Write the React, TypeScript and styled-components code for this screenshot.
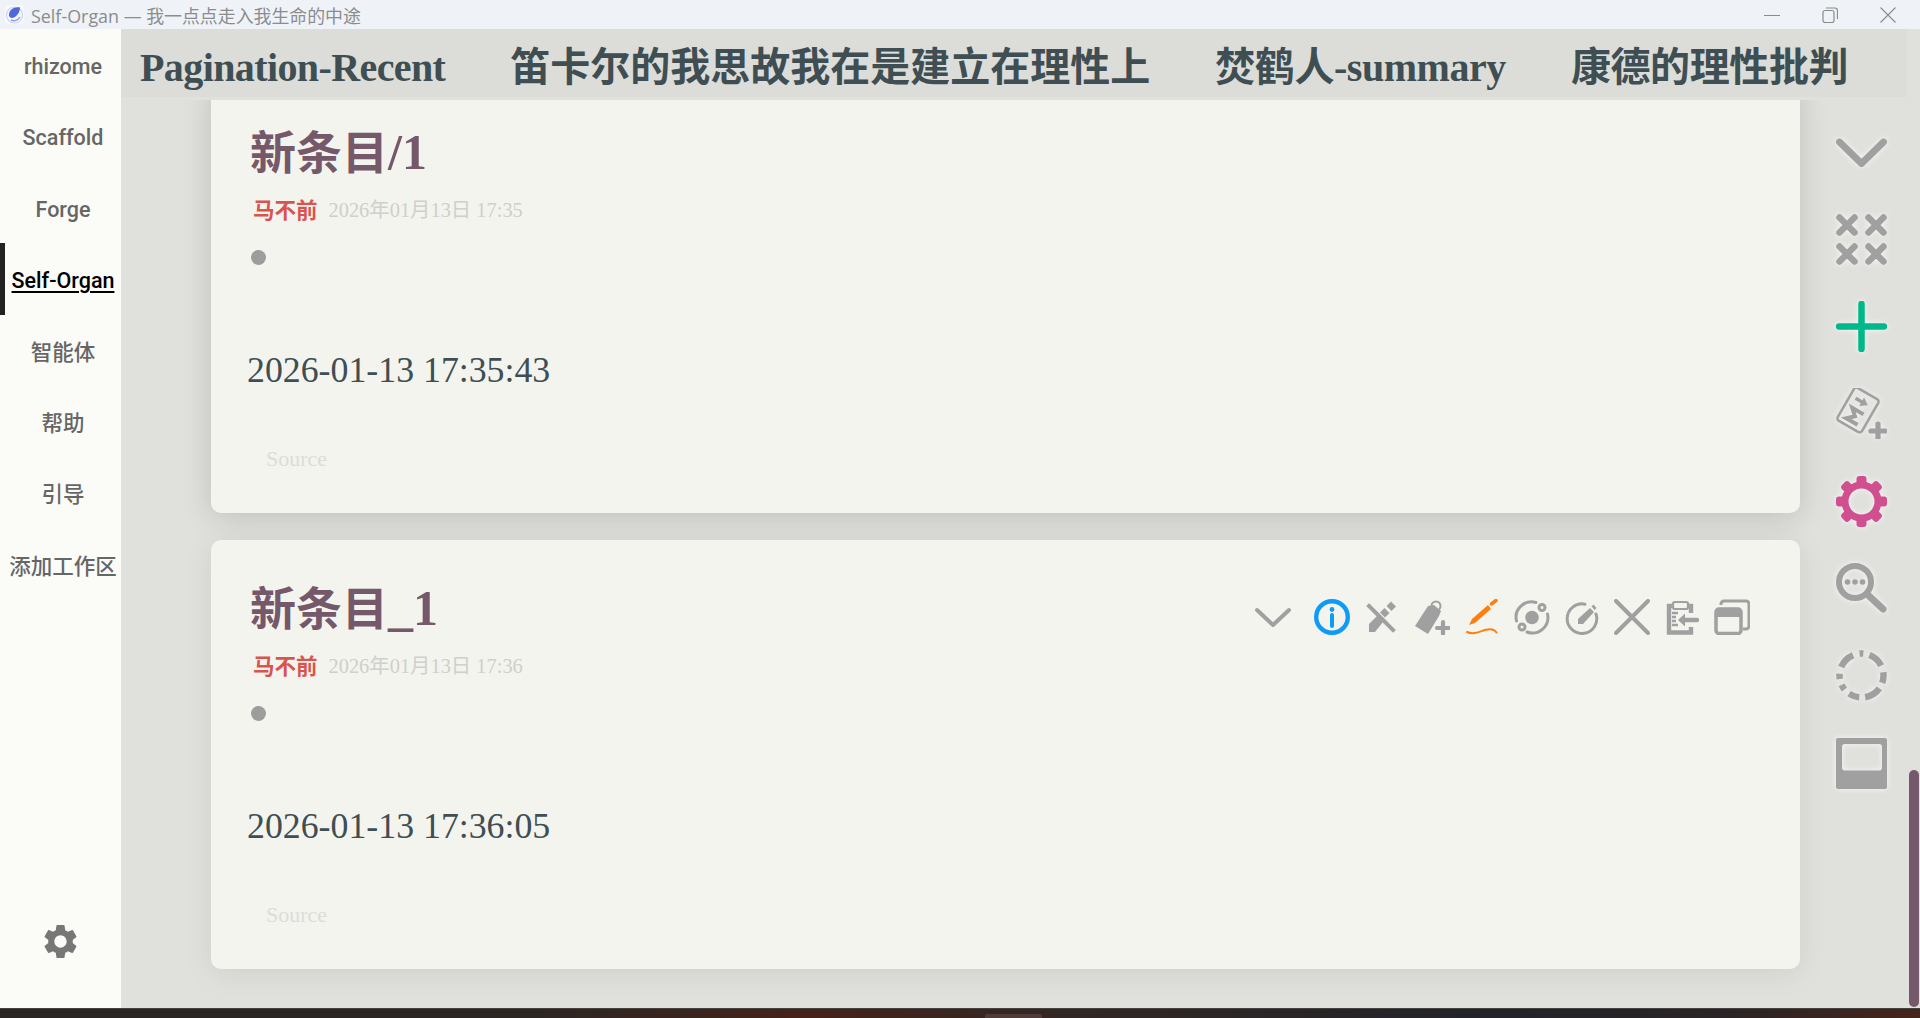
import * as React from 'react';
import styled, { createGlobalStyle } from 'styled-components';
import { MdSettings } from 'react-icons/md';

const GlobalStyle = createGlobalStyle`
    html, body {
        margin: 0;
        height: 100%;
        overflow: hidden;
        background: #e0e1dd;
    }
    * {
        box-sizing: border-box;
    }
`

const serif = `"Liberation Serif", "Noto Sans CJK SC", serif`;
const sans = `Roboto, "Noto Sans CJK SC", sans-serif`;
const iconGrey = '#a0a0a0';

const Shell = styled.div`
    display: flex;
    flex-direction: column;
    width: 1920px;
    height: 1018px;
`

const TitleBar = styled.div`
    display: flex;
    align-items: center;
    height: 29px;
    flex-shrink: 0;
    padding-left: 5px;
    background: #eff3f7;
`

const AppTitle = styled.div`
    margin-left: 7px;
    font-family: "Open Sans", "Noto Sans CJK SC", sans-serif;
    font-size: 17.9px;
    color: #8a8d90;
    white-space: nowrap;
`

const WindowButtons = styled.div`
    display: flex;
    align-items: center;
    gap: 42px;
    margin-left: auto;
    padding-right: 24px;
`

const Body = styled.div`
    display: flex;
    flex: 1;
    min-height: 0;
`

const Sidebar = styled.nav`
    display: flex;
    flex-direction: column;
    width: 121px;
    flex-shrink: 0;
    background: #fbfcf7;
`

const NavItem = styled.div<{ $active?: boolean }>`
    display: flex;
    align-items: center;
    justify-content: center;
    height: 71.4px;
    padding-top: 4px;
    border-left: 5px solid ${(p) => (p.$active ? '#222' : 'transparent')};
    font-family: ${sans};
    font-size: 21.5px;
    font-weight: 500;
    line-height: 1;
    white-space: nowrap;
    color: ${(p) => (p.$active ? '#000' : '#666')};
    text-decoration: ${(p) => (p.$active ? 'underline' : 'none')};
    text-decoration-thickness: 2px;
    text-underline-offset: 3px;
`

const SidebarFooter = styled.div`
    display: flex;
    justify-content: center;
    margin-top: auto;
    padding-bottom: 46px;
    color: #777;
`

const Main = styled.main`
    display: flex;
    flex-direction: column;
    flex: 1;
    min-width: 0;
`

const TabBar = styled.div`
    display: flex;
    align-items: center;
    gap: 65px;
    width: 1786px;
    height: 68px;
    flex-shrink: 0;
    margin-bottom: 3px;
    padding: 9px 0 0 19px;
    background: #dcdcd8;
`

const Tab = styled.div<{ $tracking?: number }>`
    font-family: ${serif};
    font-size: 40px;
    font-weight: 700;
    line-height: 1;
    letter-spacing: ${(p) => p.$tracking ?? 0}px;
    white-space: nowrap;
    color: #3f4e52;
`

const Content = styled.div`
    display: flex;
    flex: 1;
    min-height: 0;
`

const Scroller = styled.div`
    display: flex;
    flex-direction: column;
    justify-content: flex-end;
    gap: 27px;
    width: 1715px;
    flex-shrink: 0;
    overflow: hidden;
    padding: 0 36px 39px 90px;
`

const Card = styled.article<{ $hovered?: boolean }>`
    display: flex;
    flex-direction: column;
    height: 429px;
    flex-shrink: 0;
    padding: 37px 50px 0 39px;
    border-radius: 10px;
    background: #f3f4ee;
    box-shadow: ${(p) =>
        p.$hovered ? '0 4px 30px rgba(0, 0, 0, 0.08)' : '0 4px 30px rgba(0, 0, 0, 0.15)'};
`

const TitleRow = styled.div`
    display: flex;
    align-items: center;
    justify-content: space-between;
    height: 60px;
`

const CardTitle = styled.h2`
    margin: 2px 0 0;
    font-family: ${serif};
    font-size: 46px;
    font-weight: 700;
    line-height: 1;
    color: #75596b;
`

const TitleTail = styled.span`
    font-size: 50px;
`

const Actions = styled.div`
    display: flex;
    gap: 14px;
    margin-top: 20px;
`

const ActionIcon = styled.svg<{ $wide?: boolean }>`
    width: 36px;
    height: 36px;
    flex-shrink: 0;
    margin-right: ${(p) => (p.$wide ? '9px' : '0')};
`

const MetaRow = styled.div`
    display: flex;
    align-items: center;
    gap: 11px;
    height: 30px;
    margin: 12px 0 0 3px;
`

const Author = styled.span`
    font-family: ${serif};
    font-size: 21.5px;
    font-weight: 700;
    color: #d9534f;
`

const Stamp = styled.span`
    font-family: ${serif};
    font-size: 20.4px;
    color: #cfcfcb;
`

const Bullet = styled.div`
    width: 15px;
    height: 15px;
    margin: 27px 0 0 1px;
    border-radius: 50%;
    background: #9d9d9d;
`

const BodyText = styled.div`
    height: 44px;
    margin-top: 83px;
    margin-left: -3px;
    font-family: ${serif};
    font-size: 35.8px;
    line-height: 44px;
    color: #3f4e52;
`

const SourceLink = styled.div`
    height: 30px;
    margin: 52px 0 0 16px;
    font-family: ${serif};
    font-size: 22px;
    line-height: 30px;
    color: #dcdcd9;
`

const SideTools = styled.div`
    display: flex;
    flex-direction: column;
    gap: 36.3px;
    width: 51px;
    flex-shrink: 0;
    padding-top: 26.5px;
`

const SideIcon = styled.svg`
    display: block;
    width: 51px;
    height: 51px;
    flex-shrink: 0;
    filter: drop-shadow(0 0 3px rgba(255, 255, 255, 0.75));
`

const ScrollTrack = styled.div`
    display: flex;
    align-items: flex-end;
    width: 11px;
    margin-left: 22px;
    padding-bottom: 1px;
`

const ScrollThumb = styled.div`
    width: 10px;
    height: 237px;
    border-radius: 5px;
    background: #75596b;
`

const Taskbar = styled.div`
    display: flex;
    align-items: flex-end;
    justify-content: center;
    height: 10px;
    flex-shrink: 0;
    padding-left: 106px;
    border-top: 1px solid #45413f;
    background: linear-gradient(90deg, #292624 0%, #2c2623 28%, #44231a 42%, #312724 56%, #22242a 78%, #2a2426 90%, #45251a 100%);
`

const TaskbarItem = styled.div`
    width: 57px;
    height: 4px;
    border-radius: 2px 2px 0 0;
    background: #4d3c37;
`

const tabs = [
    { label: 'Pagination-Recent', tracking: -0.6 },
    { label: '笛卡尔的我思故我在是建立在理性上' },
    { label: '焚鹤人-summary', tracking: -0.45 },
    { label: '康德的理性批判', tracking: -0.4 },
];
const navItems = ['rhizome', 'Scaffold', 'Forge', 'Self-Organ', '智能体', '帮助', '引导', '添加工作区'];

const entries = [
    { head: '新条目', tail: '/1', stamp: '2026年01月13日 17:35', body: '2026-01-13 17:35:43' },
    { head: '新条目', tail: '_1', stamp: '2026年01月13日 17:36', body: '2026-01-13 17:36:05', hovered: true },
];

const dashDegrees = [10, 16, 42, 18, 28, 16, 44, 16, 28, 16, 14, 16, 14, 18, 44, 20];

const WindowGlyphs = () => (
    <WindowButtons>
        <svg width="16" height="16" viewBox="0 0 16 16" fill="none" stroke="#8a8a8a">
            <path d="M0 8.5H16" />
        </svg>
        <svg width="16" height="16" viewBox="0 0 16 16" fill="none" stroke="#8a8a8a" strokeWidth="1.2">
            <rect x="1" y="3.5" width="11" height="12" rx="2" />
            <path d="M4 1H13A2.5 2.5 0 0 1 15.5 3.500V12" />
        </svg>
        <svg width="16" height="16" viewBox="0 0 16 16" fill="none" stroke="#8a8a8a" strokeWidth="1.1">
            <path d="M0.500 0.500L15.500 15.500M15.500 0.500L0.500 15.500" />
        </svg>
    </WindowButtons>
);

const AppLogo = () => (
    <svg width="19" height="19" viewBox="0 0 19 19">
        <rect width="19" height="19" rx="4" fill="#f7f8fd" />
        <circle cx="9.500" cy="10" r="8" fill="none" stroke="#cdd3f3" strokeWidth="1.2" />
        <path d="M15 2.500C9 1.500 3.500 5 4 10.500C4.500 13 7 13.500 9 12.500C12 11 15 7 15 2.500Z" fill="#4f68dc" />
        <path d="M6 15C9 16.500 13 15.500 15 12" fill="none" stroke="#8d9be8" strokeWidth="1.4" />
    </svg>
);

// card action row, left to right
const ActionRow = () => (
    <Actions>
        <ActionIcon $wide viewBox="0 0 36 36" fill="none" stroke={iconGrey} strokeWidth="4" strokeLinecap="round" strokeLinejoin="round">
            <path d="M2 11L18 26L34 11" />
        </ActionIcon>
        <ActionIcon viewBox="0 0 36 36" fill="none" stroke="#0d9bf5">
            <circle cx="18" cy="18" r="15.800" strokeWidth="4.400" />
            <circle cx="18" cy="10.500" r="2.400" fill="#0d9bf5" stroke="none" />
            <path d="M18 16V27" strokeWidth="4" strokeLinecap="round" />
        </ActionIcon>
        <ActionIcon viewBox="0 0 36 36" fill="none" stroke={iconGrey}>
            <path d="M5 7L29 31" strokeWidth="4" strokeLinecap="square" />
            <path d="M5 33V25L13 17L19 23L11 33Z" fill={iconGrey} stroke="none" />
            <path d="M18.500 16L23 11.500M25 9.500L29.500 5" strokeWidth="7" />
        </ActionIcon>
        <ActionIcon viewBox="0 0 36 36" fill="none" stroke={iconGrey}>
            <path d="M1 27L14 7L20 6L27 12L25 17L14 35Z" fill={iconGrey} stroke="none" />
            <circle cx="22" cy="7" r="4.500" strokeWidth="2" />
            <path d="M29 23V35M23 29H35" strokeWidth="4.200" strokeLinecap="round" />
        </ActionIcon>
        <ActionIcon viewBox="0 0 36 36" fill="none" stroke="#ff7f0e" strokeLinecap="round">
            <path d="M5 26L8 20L24 6L27 10L11 24Z" fill="#ff7f0e" stroke="none" />
            <path d="M27.500 5L32 1.500" strokeWidth="3.500" />
            <path d="M3 33C9 36 15 33 21 31C26 29.500 30 29.500 32.500 33.500" strokeWidth="2" />
        </ActionIcon>
        <ActionIcon viewBox="0 0 36 36" fill="none" stroke={iconGrey} strokeWidth="3">
            <circle cx="18" cy="18.500" r="6.800" fill={iconGrey} stroke="none" />
            <path d="M2.500 22A15.500 15.500 0 0 1 22 3.500" strokeLinecap="round" />
            <path d="M33.500 15A15.500 15.500 0 0 1 13 33" strokeLinecap="round" />
            <circle cx="28" cy="8.500" r="3" />
            <circle cx="8" cy="28" r="3" />
        </ActionIcon>
        <ActionIcon viewBox="0 0 36 36" fill="none" stroke={iconGrey}>
            <path d="M21 5.200A14.800 14.800 0 1 0 32 15" strokeWidth="3" strokeLinecap="round" />
            <path d="M14 25V20L26 9L30 13L19 25Z" fill={iconGrey} stroke="none" />
            <path d="M27.500 7.500L29.500 5.500L32.500 9L30.500 11Z" fill={iconGrey} stroke="none" />
        </ActionIcon>
        <ActionIcon viewBox="0 0 36 36" fill="none" stroke={iconGrey} strokeWidth="4" strokeLinecap="round">
            <path d="M2 2L34 34M34 2L2 34" />
        </ActionIcon>
        <ActionIcon viewBox="0 0 36 36" fill="none" stroke={iconGrey}>
            <path d="M9 7H5V33.500H27V28M27 14V7H24" strokeWidth="4.400" />
            <rect x="9" y="3" width="15" height="7" rx="2" strokeWidth="2.200" fill="#f3f4ee" />
            <path d="M8 14H14M8 18H12M8 22H12M8 26H14" strokeWidth="2.400" />
            <path d="M19 21H33" strokeWidth="4.400" strokeLinecap="round" />
            <path d="M14 21L21 14.500V27.500Z" fill={iconGrey} stroke="none" />
        </ActionIcon>
        <ActionIcon viewBox="0 0 36 36" fill="none" stroke={iconGrey}>
            <path d="M7 6V5A3 3 0 0 1 10 2H32A3 3 0 0 1 35 5V27A3 3 0 0 1 32 30H29" strokeWidth="3" />
            <rect x="2" y="10" width="25" height="24.500" rx="3" strokeWidth="3.500" />
            <path d="M2 11H27V18H2Z" fill={iconGrey} stroke="none" />
        </ActionIcon>
    </Actions>
);

const MarkdownAdd = () => (
    <SideIcon viewBox="0 0 51 51" fill="none" stroke={iconGrey}>
        <g transform="rotate(-60 22 22)">
            <rect x="3" y="8" width="38" height="28" rx="3" strokeWidth="2.500" />
            <path d="M9 29V16L15 22.500L21 16V29" strokeWidth="4" strokeLinejoin="miter" />
            <path d="M31 14V23" strokeWidth="3.500" />
            <path d="M26 21H36L31 28Z" fill={iconGrey} stroke="none" />
        </g>
        <path d="M42 36V50M35 43H49" strokeWidth="5.200" strokeLinecap="round" />
    </SideIcon>
);

const SideToolbar = () => (
    <SideTools>
        <SideIcon viewBox="0 0 51 51" fill="none" stroke={iconGrey} strokeWidth="6.800" strokeLinecap="round" strokeLinejoin="round">
            <path d="M3.500 15L25.500 36.500L47.500 15" />
        </SideIcon>
        <SideIcon viewBox="0 0 51 51" fill="none" stroke={iconGrey} strokeWidth="6.500" strokeLinecap="round">
            <path d="M3.500 3.500L18.500 18.500M18.500 3.500L3.500 18.500M32.500 3.500L47.500 18.500M47.500 3.500L32.500 18.500M3.500 32.500L18.500 47.500M18.500 32.500L3.500 47.500M32.500 32.500L47.500 47.500M47.500 32.500L32.500 47.500" />
        </SideIcon>
        <SideIcon viewBox="0 0 51 51" fill="none" stroke="#00b98a" strokeWidth="6.500" strokeLinecap="round">
            <path d="M25.500 3V48M3 25.500H48" />
        </SideIcon>
        <MarkdownAdd />
        <SideIcon viewBox="0 0 51 51" fill="none" stroke="#d0508f">
            <circle cx="25.500" cy="25.500" r="16.500" strokeWidth="7" />
            {[0, 45, 90, 135, 180, 225, 270, 315].map((angle) => (
                <rect key={angle} x="20.500" y="0" width="10" height="10" rx="3" fill="#d0508f" stroke="none" transform={`rotate(${angle} 25.500 25.500)`} />
            ))}
        </SideIcon>
        <SideIcon viewBox="0 0 51 51" fill="none" stroke={iconGrey}>
            <circle cx="19" cy="19" r="16" strokeWidth="6" />
            <path d="M32 32L47 46" strokeWidth="7" strokeLinecap="round" />
            <circle cx="11.500" cy="19" r="2.800" fill={iconGrey} stroke="none" />
            <circle cx="19" cy="19" r="2.800" fill={iconGrey} stroke="none" />
            <circle cx="26.500" cy="19" r="2.800" fill={iconGrey} stroke="none" />
        </SideIcon>
        <SideIcon viewBox="0 0 51 51" fill="none" stroke={iconGrey}>
            <circle
                cx="25.500"
                cy="25.500"
                r="22"
                strokeWidth="6.500"
                strokeDasharray={dashDegrees.map((d) => d * 0.384).join(' ')}
                transform="rotate(-95 25.500 25.500)"
            />
        </SideIcon>
        <SideIcon viewBox="0 0 51 51">
            <path
                fillRule="evenodd"
                fill={iconGrey}
                d="M2 0H49A2 2 0 0 1 51 2V49A2 2 0 0 1 49 51H2A2 2 0 0 1 0 49V2A2 2 0 0 1 2 0ZM9 6A3 3 0 0 0 6 9V29.500A3 3 0 0 0 9 32.500H43A3 3 0 0 0 46 29.500V9A3 3 0 0 0 43 6Z"
            />
        </SideIcon>
    </SideTools>
);

export default function App() {
    return (
        <Shell>
            <GlobalStyle />
            <TitleBar>
                <AppLogo />
                <AppTitle>Self-Organ — 我一点点走入我生命的中途</AppTitle>
                <WindowGlyphs />
            </TitleBar>
            <Body>
                <Sidebar>
                    {navItems.map((item) => (
                        <NavItem key={item} $active={item === 'Self-Organ'}>{item}</NavItem>
                    ))}
                    <SidebarFooter>
                        <MdSettings size={41} />
                    </SidebarFooter>
                </Sidebar>
                <Main>
                    <TabBar>
                        {tabs.map((tab) => (
                            <Tab key={tab.label} $tracking={tab.tracking}>{tab.label}</Tab>
                        ))}
                    </TabBar>
                    <Content>
                        <Scroller>
                            {entries.map((entry) => (
                                <Card key={entry.tail} $hovered={entry.hovered}>
                                    <TitleRow>
                                        <CardTitle>{entry.head}<TitleTail>{entry.tail}</TitleTail></CardTitle>
                                        {entry.hovered && <ActionRow />}
                                    </TitleRow>
                                    <MetaRow>
                                        <Author>马不前</Author>
                                        <Stamp>{entry.stamp}</Stamp>
                                    </MetaRow>
                                    <Bullet />
                                    <BodyText>{entry.body}</BodyText>
                                    <SourceLink>Source</SourceLink>
                                </Card>
                            ))}
                        </Scroller>
                        <SideToolbar />
                        <ScrollTrack>
                            <ScrollThumb />
                        </ScrollTrack>
                    </Content>
                </Main>
            </Body>
            <Taskbar>
                <TaskbarItem />
            </Taskbar>
        </Shell>
    );
}
